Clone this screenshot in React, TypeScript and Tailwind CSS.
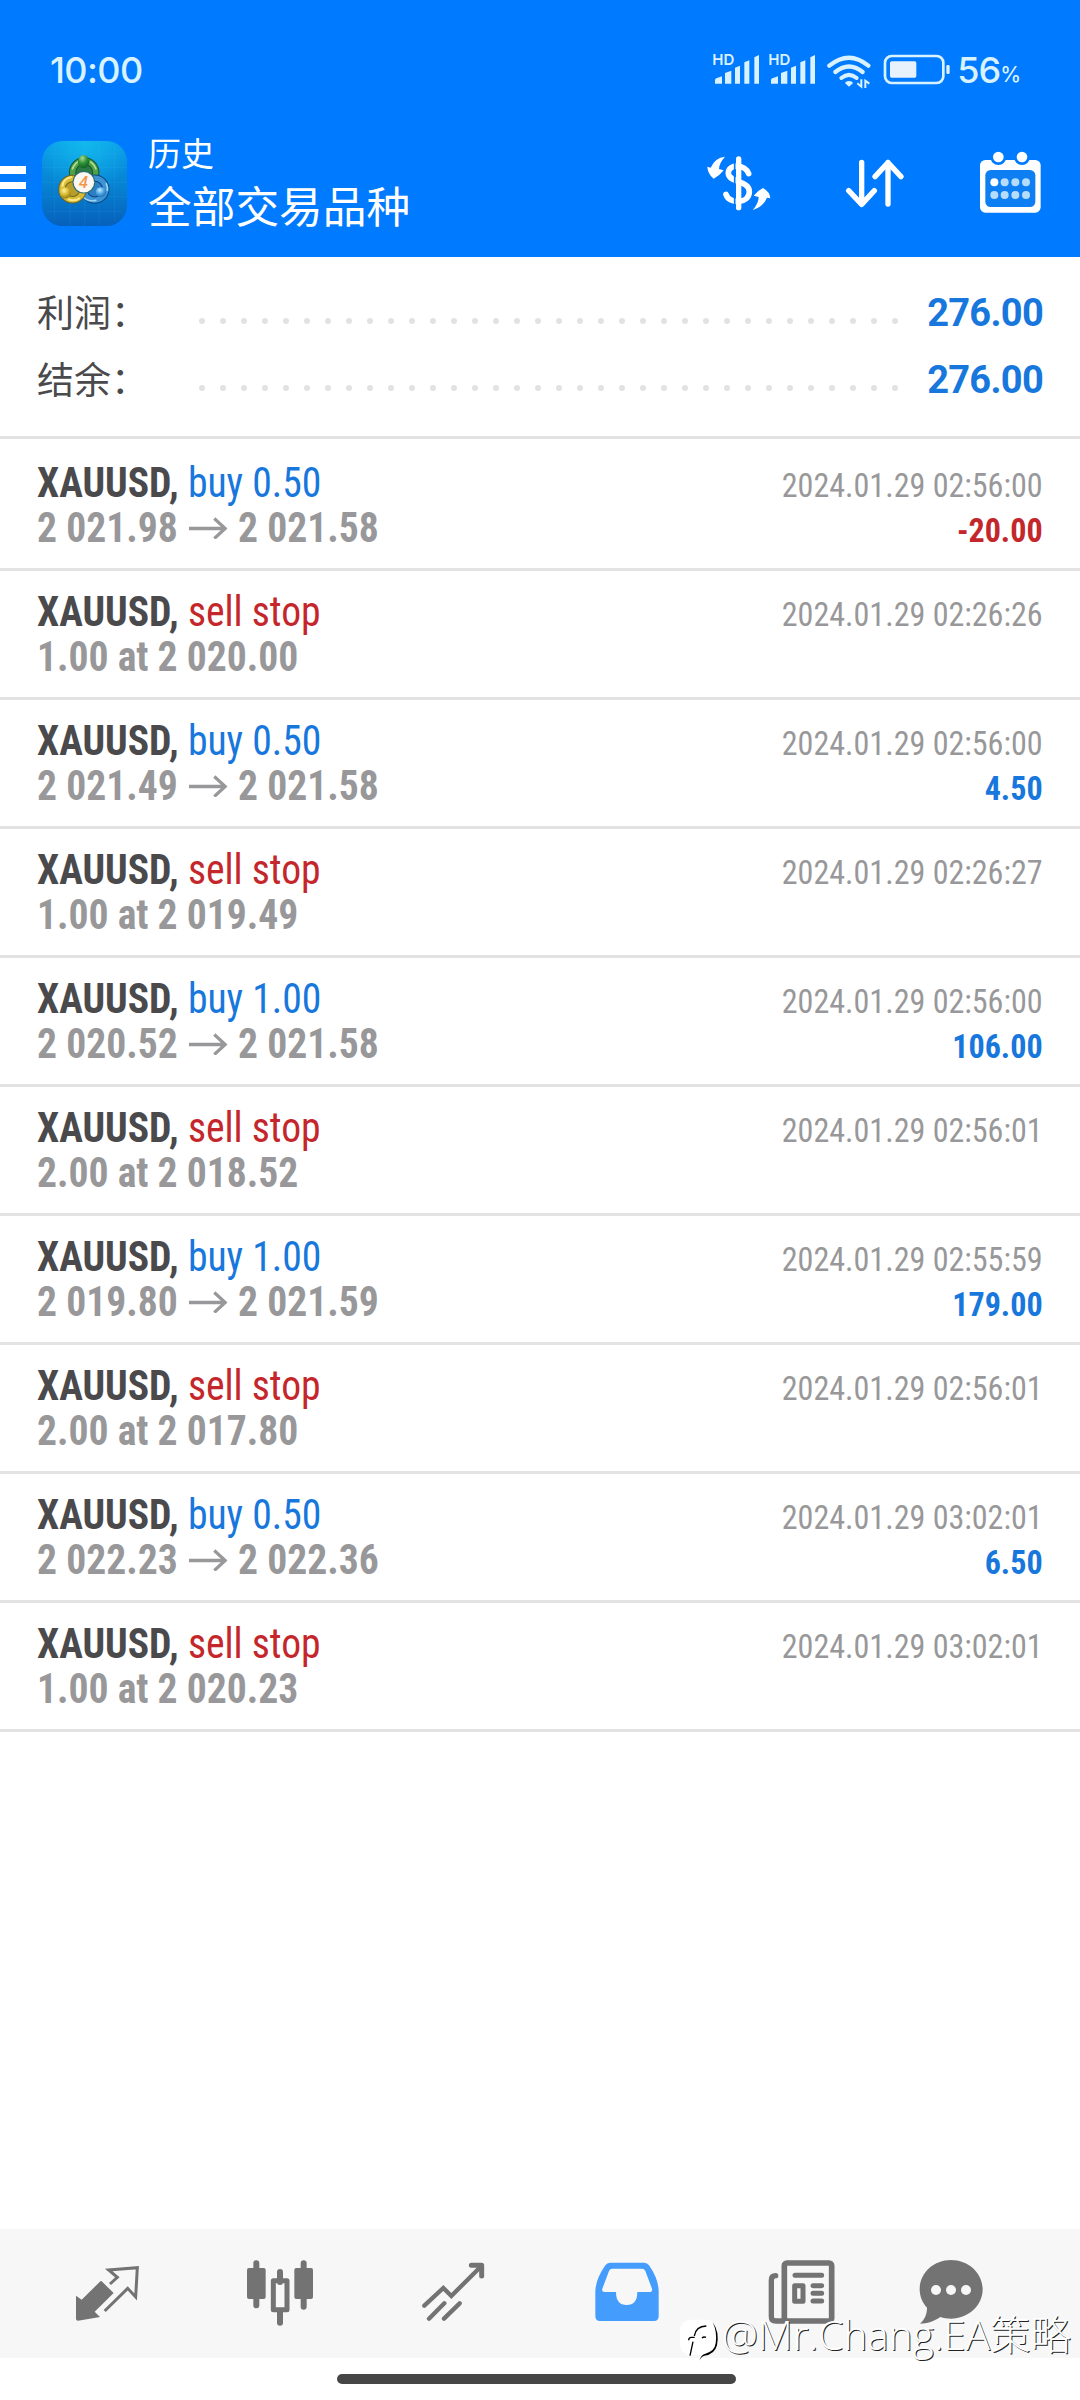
import type { ReactNode } from "react"

type Deal = {
    side: string
    buy: boolean
    from: string
    to?: string
    time: string
    profit?: string
}

const deals: Array<Deal> = [
    { side: "buy 0.50", buy: true, from: "2 021.98", to: "2 021.58", time: "2024.01.29 02:56:00", profit: "-20.00" },
    { side: "sell stop", buy: false, from: "1.00 at 2 020.00", time: "2024.01.29 02:26:26" },
    { side: "buy 0.50", buy: true, from: "2 021.49", to: "2 021.58", time: "2024.01.29 02:56:00", profit: "4.50" },
    { side: "sell stop", buy: false, from: "1.00 at 2 019.49", time: "2024.01.29 02:26:27" },
    { side: "buy 1.00", buy: true, from: "2 020.52", to: "2 021.58", time: "2024.01.29 02:56:00", profit: "106.00" },
    { side: "sell stop", buy: false, from: "2.00 at 2 018.52", time: "2024.01.29 02:56:01" },
    { side: "buy 1.00", buy: true, from: "2 019.80", to: "2 021.59", time: "2024.01.29 02:55:59", profit: "179.00" },
    { side: "sell stop", buy: false, from: "2.00 at 2 017.80", time: "2024.01.29 02:56:01" },
    { side: "buy 0.50", buy: true, from: "2 022.23", to: "2 022.36", time: "2024.01.29 03:02:01", profit: "6.50" },
    { side: "sell stop", buy: false, from: "1.00 at 2 020.23", time: "2024.01.29 03:02:01" },
]

const Signal = () => (
    <div className="relative h-[30px] w-[56px]">
        <span className="absolute -left-[1px] -top-[1px] font-['Inter'] text-[15px] leading-[14px] font-semibold">HD</span>
        <svg className="absolute left-0 top-0 h-[30px] w-[48px]" viewBox="102 74 144 90" fill="currentColor">
            <path d="M108 163v-10q0-4 4-6l17-6v22z" />
            <path d="M138 163v-32l19-7v39z" />
            <path d="M168 163v-48l15-6v54z" />
            <path d="M196 163V99l15-6v70z" />
            <path d="M226 163V84l14-7v86z" />
        </svg>
    </div>
)

const StatusBar = () => (
    <div className="flex h-[141px] items-start justify-between pl-[50px] pr-[60px] pt-[52px] text-[#d8f2ff]">
        <div className="font-['Inter'] text-[36px] font-medium leading-[36px] tracking-[-0.6px]">10:00</div>
        <div className="flex pt-[2px]">
            <Signal />
            <Signal />
            <svg className="ml-[2px] h-[36px] w-[46px]" viewBox="444 68 138 108" fill="none" stroke="currentColor">
                <path d="M451 103Q510 55 568 103" strokeWidth="13" strokeLinecap="round" />
                <path d="M469 122Q510 89 551 122" strokeWidth="13" strokeLinecap="round" />
                <path d="M487 140Q510 121 533 140" strokeWidth="12" strokeLinecap="round" />
                <path d="M501 155Q510 148 519 155L510 163z" strokeWidth="5" fill="currentColor" strokeLinejoin="round" />
                <path d="M547 144v22l-12-10M559 170v-22l12 9" strokeWidth="6" />
            </svg>
            <svg className="ml-[10px] h-[32px] w-[68px]" viewBox="615 72 204 96">
                <rect x="621" y="78" width="175" height="81" rx="20" fill="none" stroke="currentColor" strokeWidth="8" />
                <rect x="636" y="94" width="79" height="49" rx="5" fill="#e8f2fc" />
                <rect x="805" y="105" width="10" height="27" rx="4" fill="currentColor" />
            </svg>
            <div className="-mt-[2px] ml-[6px] flex font-['Inter'] text-[36px] font-medium leading-[37px] tracking-[-1px]">
                56<span className="text-[21px] leading-[45px]">%</span>
            </div>
        </div>
    </div>
)

const AppLogo = () => (
    <svg className="ml-[16px] h-[85px] w-[85px]" viewBox="36 36 256 256">
        <defs>
            <linearGradient id="sky" x1="0" y1="0" x2="0" y2="1">
                <stop offset="0" stopColor="#0a9ae8" />
                <stop offset=".5" stopColor="#0784d2" />
                <stop offset="1" stopColor="#0660bb" />
            </linearGradient>
            <radialGradient id="glow" cx=".5" cy="0" r=".6">
                <stop offset="0" stopColor="#12b9ec" />
                <stop offset="1" stopColor="#12b9ec" stopOpacity="0" />
            </radialGradient>
            <radialGradient id="green" cx=".4" cy=".25" r=".8">
                <stop offset="0" stopColor="#a5dc92" />
                <stop offset=".5" stopColor="#2f9137" />
                <stop offset="1" stopColor="#0d5c22" />
            </radialGradient>
            <radialGradient id="gold" cx=".4" cy=".3" r=".8">
                <stop offset="0" stopColor="#fff3a0" />
                <stop offset=".5" stopColor="#d5b62b" />
                <stop offset="1" stopColor="#7d6c12" />
            </radialGradient>
            <radialGradient id="azure" cx=".4" cy=".3" r=".8">
                <stop offset="0" stopColor="#c2ecff" />
                <stop offset=".5" stopColor="#4ca4e2" />
                <stop offset="1" stopColor="#135fa6" />
            </radialGradient>
        </defs>
        <rect x="36" y="36" width="256" height="256" rx="62" fill="url(#sky)" />
        <rect x="36" y="36" width="256" height="256" rx="62" fill="url(#glow)" />
        <path d="M73 50v228M120 36v256M165 36v256M208 36v256M254 50v228M50 73h228M36 116h256M36 160h256M36 204h256M50 248h228" stroke="#5fd0ff" strokeOpacity=".14" strokeWidth="2" />
        <g fill="none">
            <circle cx="163" cy="131" r="35" fill="#2c7a45" stroke="#17522c" strokeWidth="22" />
            <circle cx="163" cy="131" r="35" stroke="#4fa148" strokeWidth="16" />
            <path d="M127 122q5-16 18-24M199 122q-5-16-18-24" stroke="#b4e09c" strokeWidth="5" />
            <circle cx="195" cy="181" r="33" fill="#2c7fc4" stroke="#0b4680" strokeWidth="22" />
            <circle cx="195" cy="181" r="33" stroke="#3d93d4" strokeWidth="16" />
            <path d="M229 163a38 38 0 0 1 4 24M156 198q12 22 44 17" stroke="#9bd4f5" strokeWidth="5" />
            <circle cx="128" cy="181" r="32" fill="#b99d2a" stroke="#6e6420" strokeWidth="22" />
            <circle cx="128" cy="181" r="32" stroke="#d8bb35" strokeWidth="16" />
            <path d="M97 174q2-25 29-30M114 211q20 8 36-3" stroke="#f8e886" strokeWidth="6" />
        </g>
        <circle cx="162" cy="160" r="34" fill="#2a6c70" />
        <ellipse cx="161" cy="98" rx="17" ry="20" fill="url(#green)" />
        <circle cx="106" cy="192" r="17" fill="url(#gold)" />
        <circle cx="213" cy="190" r="15" fill="url(#azure)" />
        <circle cx="162" cy="160" r="31" fill="#faf6f1" />
        <text x="161" y="178" textAnchor="middle" fill="#f0954a" fontFamily="Open Sans, sans-serif" fontSize="48" fontWeight="600" fontStyle="italic">4</text>
    </svg>
)

const TitleBar = () => (
    <div className="flex h-[116px] items-start">
        <div className="mt-[25px] flex w-[26px] flex-col gap-[8px]">
            <span className="h-[7.5px] bg-white" />
            <span className="h-[7.5px] bg-white" />
            <span className="h-[7.5px] bg-white" />
        </div>
        <AppLogo />
        <div className="-mt-[9px] ml-[21px] flex-1 font-['Noto_Sans_CJK_SC'] text-white">
            <div className="text-[33px] leading-[40px]">历史</div>
            <div className="mt-[6px] text-[43.7px] leading-[52px]">全部交易品种</div>
        </div>
        <svg className="mt-[14px] h-[57px] w-[66px]" viewBox="80 375 198 171">
            <path d="M137 380Q107 383 94 413L84 410Q85 432 103 446Q122 436 133 421L119 417Q119 400 137 380z" fill="#fff" />
            <path d="M220 540Q250 533 263 503L273 505Q272 486 251 474Q233 483 223 497L238 501Q238 520 220 540z" fill="#fff" />
            <path d="M208 431C198 402 147 400 147 430C147 458 210 450 210 485C210 520 150 525 140 493" stroke="#fff" strokeWidth="17" strokeLinecap="round" fill="none" />
            <path d="M166 387v148" stroke="#007aff" strokeWidth="5" />
            <path d="M178 387v146" stroke="#fff" strokeWidth="16" strokeLinecap="round" />
        </svg>
        <svg className="ml-[72px] mt-[16px] h-[52px] w-[64px]" viewBox="494 381 192 156" fill="none" stroke="#fff" strokeWidth="16" strokeLinecap="round" strokeLinejoin="round">
            <path d="M547 397v125M508 482l39 41 38-41" />
            <path d="M626 522V397M587 440l39-42 39 42" />
        </svg>
        <svg className="ml-[70px] mr-[37px] mt-[9px] h-[65px] w-[65px]" viewBox="894 360 195 195">
            <rect x="900" y="390" width="182" height="158" rx="16" fill="#fff" />
            <circle cx="955" cy="381" r="24" fill="#007aff" />
            <circle cx="1026" cy="381" r="24" fill="#007aff" />
            <circle cx="955" cy="381" r="16" fill="#fff" />
            <circle cx="1026" cy="381" r="16" fill="#fff" />
            <rect x="916" y="420" width="150" height="111" rx="16" fill="#0d7ff2" />
            <g fill="#b5dcfb">
                <circle cx="943" cy="457" r="12" fill="#fff" />
                <circle cx="974" cy="457" r="12" />
                <circle cx="1006" cy="457" r="12" />
                <circle cx="1038" cy="457" r="12" />
                <circle cx="943" cy="495" r="12" />
                <circle cx="974" cy="495" r="12" />
                <circle cx="1006" cy="495" r="12" />
                <circle cx="1038" cy="495" r="12" />
            </g>
        </svg>
    </div>
)

const SummaryLine = ({ label, value }: { label: string, value: string }) => (
    <div className="flex h-[67px] items-center">
        <div className="w-[162px] whitespace-nowrap pb-[3px] font-['Noto_Sans_CJK_SC'] text-[37px] leading-[64px] text-[#4a4a4c]">{label}</div>
        <div className="mt-[16px] flex w-[699px] justify-between">
            {Array.from({ length: 34 }, (_, index) => (
                <span key={index} className="size-[6px] rounded-full bg-[#e2e2e2]" />
            ))}
        </div>
        <div className="flex-1 pt-[1px] text-right text-[38px] font-bold tracking-[-0.7px] text-[#1777dc]">{value}</div>
    </div>
)

const DealRow = ({ deal }: { deal: Deal }) => (
    <div className="flex h-[129px] justify-between border-b-[3px] border-[#e3e3e3] pl-[37px] pr-[37px] pt-[18px] [font-stretch:75%]">
        <div className="origin-left scale-x-[0.943] whitespace-nowrap text-[42px] leading-[45px]">
            <div>
                <span className="font-bold text-[#4a4a4d]">XAUUSD,</span>{" "}
                <span className={deal.buy ? "text-[#1777dc]" : "text-[#c4272b]"}>{deal.side}</span>
            </div>
            <div className="flex items-center font-bold text-[#98989a]">
                {deal.from}
                {deal.to && (
                    <>
                        <svg className="ml-[12px] mr-[11px] h-[22px] w-[41px]" viewBox="0 0 41 22" fill="none" stroke="currentColor" strokeWidth="3.4">
                            <path d="M0 11.500h39M27 1.500l11.500 10-11.500 10" />
                        </svg>
                        {deal.to}
                    </>
                )}
            </div>
        </div>
        <div className="origin-right scale-x-[0.943] pt-[3px] text-right text-[34px] leading-[45px]">
            <div className="text-[#98989a]">{deal.time}</div>
            {deal.profit && (
                <div className={deal.profit.startsWith("-") ? "font-bold text-[#c4272b]" : "font-bold text-[#1777dc]"}>{deal.profit}</div>
            )}
        </div>
    </div>
)

const Tab = ({ viewBox, children }: { viewBox: string, children: ReactNode }) => (
    <svg className="h-[129px] w-[173px] shrink-0" viewBox={viewBox} fill="none">{children}</svg>
)

const TabBar = () => (
    <div className="flex h-[129px] bg-[#f7f7f7] pl-[21px] text-[#737373]">
        <Tab viewBox="63 27 519 387">
            <path d="M305 184L341 219 284 275 300 291 234 302Q228 302 228 296V227L245 239 299 186Q302 182 305 184z" fill="currentColor" />
            <path d="M330 192l22-20-26-22 86-7-5 88-24-26-69 68" stroke="currentColor" strokeWidth="9" />
        </Tab>
        <Tab viewBox="582 27 519 387">
            <path d="M769 130v126M911 130v130M840 156v30M840 272v36" stroke="currentColor" strokeWidth="18" strokeLinecap="round" />
            <rect x="741" y="144" width="56" height="93" rx="6" fill="currentColor" />
            <rect x="883" y="144" width="56" height="93" rx="6" fill="currentColor" />
            <rect x="820" y="182" width="41" height="87" stroke="currentColor" strokeWidth="15" strokeLinejoin="round" />
        </Tab>
        <Tab viewBox="21 27 519 387">
            <path d="M193 257l57-53 24 24 88-88M207 296l46-46M252 296l47-46" stroke="currentColor" strokeWidth="13" strokeLinecap="round" />
            <path d="M334 136h31v32" stroke="currentColor" strokeWidth="15" strokeLinecap="round" strokeLinejoin="round" />
        </Tab>
        <Tab viewBox="540 27 519 387">
            <path d="M750 128h103q9 0 14 8 28 40 29 76v77q0 14-14 14H720q-14 0-14-14v-77q2-36 30-76 5-8 14-8zM757 146q-7 0-10 7l-20 53q-3 10 7 10h34q0 39 32 39t32-39h36q10 0 8-10l-20-53q-3-7-10-7z" fill="#449cfc" fillRule="evenodd" />
        </Tab>
        <Tab viewBox="99 27 519 387">
            <rect x="313" y="129" width="142" height="174" rx="8" stroke="currentColor" strokeWidth="17" />
            <path d="M287 167q-13 0-13 14v109q0 13 14 13h30" stroke="currentColor" strokeWidth="16" strokeLinecap="round" />
            <path d="M345 166h80M399 197h26M399 220h26M399 243h26" stroke="currentColor" strokeWidth="15" strokeLinecap="round" />
            <rect x="344" y="197" width="25" height="47" stroke="currentColor" strokeWidth="15" strokeLinejoin="round" />
        </Tab>
        <Tab viewBox="618 27 519 387">
            <path d="M813 120c52 0 95 39 95 88s-43 88-95 88c-12 0-22-2-32-5-18 13-40 20-61 20 15-14 21-29 21-48-14-15-22-34-22-55 0-49 42-88 94-88z" fill="currentColor" />
            <circle cx="768" cy="210" r="15" fill="#f7f7f7" />
            <circle cx="813" cy="210" r="15" fill="#f7f7f7" />
            <circle cx="858" cy="210" r="15" fill="#f7f7f7" />
        </Tab>
    </div>
)

const Watermark = () => (
    <div className="absolute left-[679px] top-[2312px] flex items-start">
        <svg className="mt-[7px] h-[46px] w-[42px] shrink-0" viewBox="-3 298 126 138">
            <rect x="0" y="300" width="110" height="106" rx="32" fill="#fff" />
            <path d="M30 408l9-42M26 362q0-9 8-9h10M43 349q4-29 36-30M66 355q5-5 12-2" stroke="#000" strokeWidth="4" fill="none" />
            <path d="M98 308q21 28 13 69-7 28-38 31-10 3-15 15 5-18 18-21 28-7 31-31 5-35-9-63z" fill="#000" />
        </svg>
        <div className="ml-[1px] whitespace-nowrap font-['Open_Sans','Noto_Sans_CJK_SC',sans-serif] text-[40.5px] font-light leading-[46px] text-white [text-shadow:1px_1px_0.5px_#222]">@Mr.Chang.EA策略</div>
    </div>
)

export default function App() {
    return (
        <div className="relative flex h-[2400px] w-[1080px] flex-col overflow-hidden bg-white font-['Roboto']">
            <div className="h-[257px] bg-[#007aff]">
                <StatusBar />
                <TitleBar />
            </div>
            <div className="h-[182px] border-b-[3px] border-[#e3e3e3] px-[37px] pt-[22px]">
                <SummaryLine label="利润：" value="276.00" />
                <SummaryLine label="结余：" value="276.00" />
            </div>
            <div className="flex-1 pt-[3px]">
                {deals.map((deal, index) => <DealRow key={index} deal={deal} />)}
            </div>
            <TabBar />
            <div className="flex h-[42px] pl-[337px] pt-[16px]">
                <div className="h-[10px] w-[399px] rounded-full bg-[#464646]" />
            </div>
            <Watermark />
        </div>
    )
}
